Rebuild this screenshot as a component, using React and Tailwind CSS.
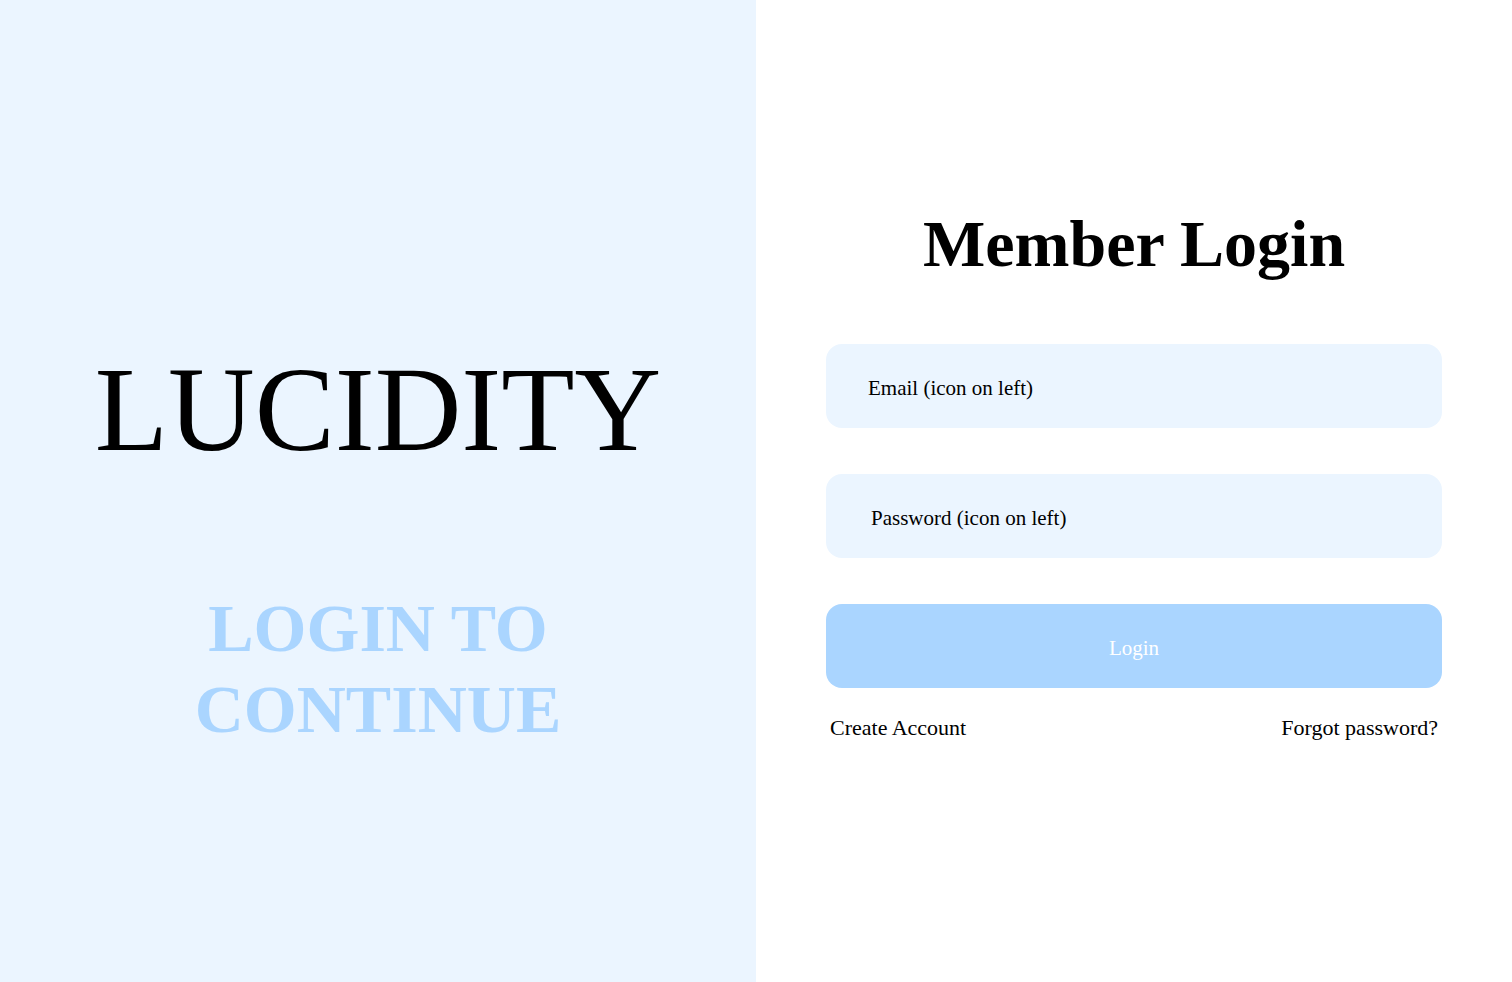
const serif = { fontFamily: '"Liberation Serif", "DejaVu Serif", serif' };

const Field = ({ label, pad }) => (
  <div className={`flex h-[84px] w-full items-center rounded-2xl bg-[#ebf5ff] ${pad} pt-[5px] text-[21px] text-black`}>
    {label}
  </div>
);

export default function App() {
  return (
    <div className="flex h-[982px] w-[1512px] overflow-hidden bg-white" style={serif}>
      <div className="flex w-[756px] flex-col items-center bg-[#ebf5ff] pt-[350px]">
        <h1 className="text-[120px] leading-none text-black">LUCIDITY</h1>
        <p className="mt-[118px] text-center text-[68px] font-bold leading-[81px] text-[#aad5ff]">
          LOGIN TO
          <br />
          CONTINUE
        </p>
      </div>

      <div className="flex w-[756px] flex-col items-center pt-[211px]">
        <h2 className="text-[66px] font-bold leading-none text-black">Member Login</h2>

        <div className="mt-[67px] flex w-[616px] flex-col gap-[46px]">
          <Field label="Email (icon on left)" pad="pl-[42px]" />
          <Field label="Password (icon on left)" pad="pl-[45px]" />
          <button className="flex h-[84px] w-full items-center justify-center rounded-2xl bg-[#aad5ff] pt-[5px] text-[21px] text-white">
            Login
          </button>
        </div>

        <div className="mt-[26px] flex w-[616px] justify-between px-[4px] text-[22px] leading-7 text-black">
          <span>Create Account</span>
          <span>Forgot password?</span>
        </div>
      </div>
    </div>
  );
}
